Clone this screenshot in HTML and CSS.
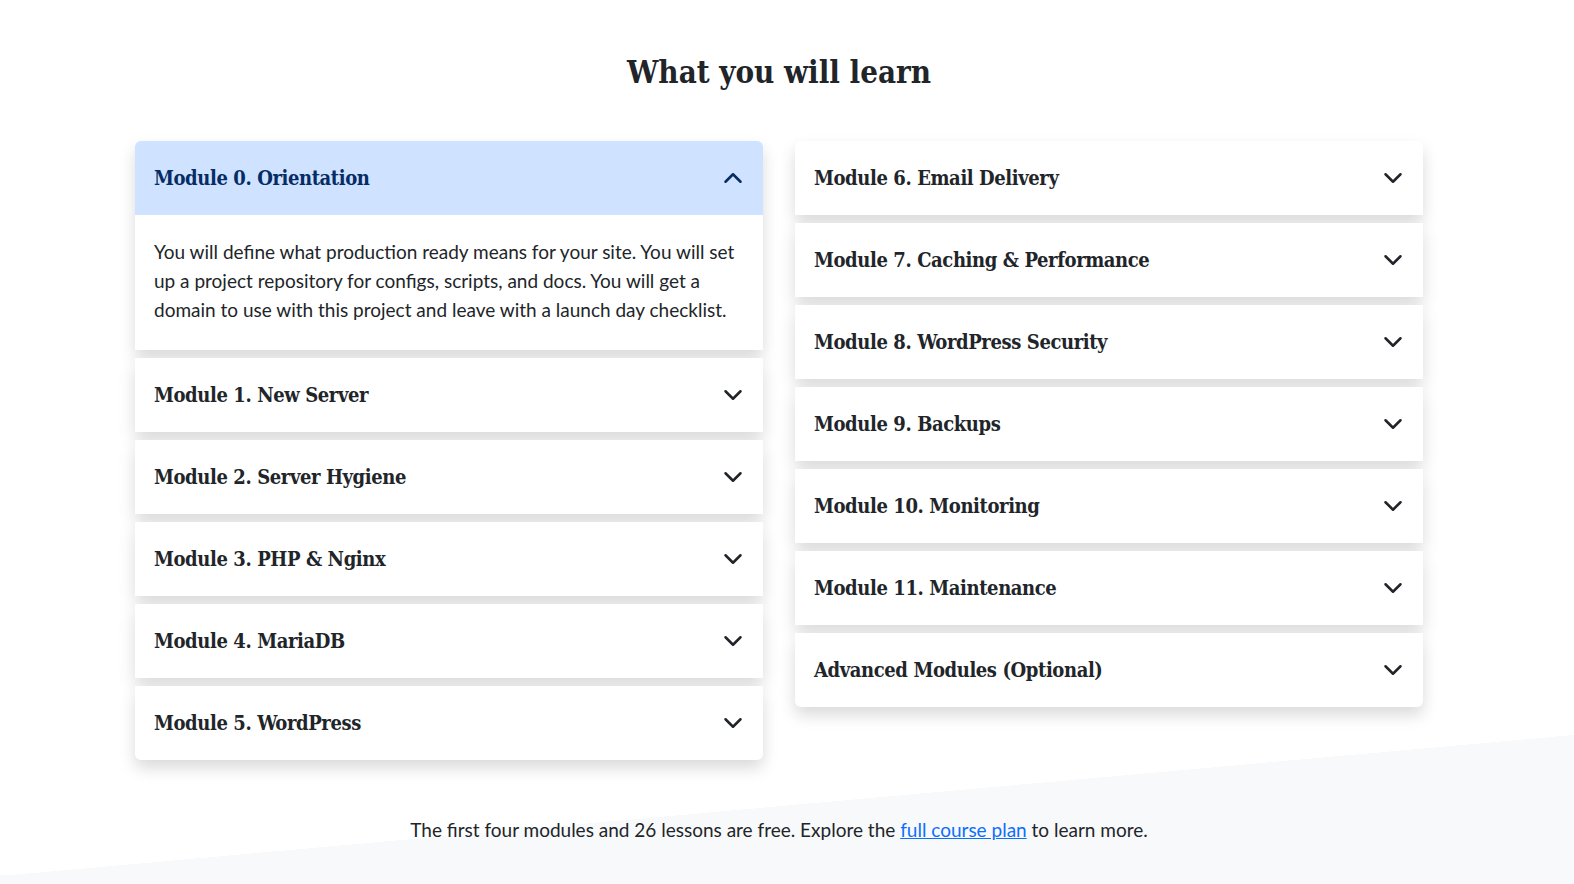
FILE: index.html
```html
<!DOCTYPE html>
<html lang="en">
<head>
<meta charset="utf-8">
<title>What you will learn</title>
<link rel="stylesheet" href="styles.css">
</head>
<body>
<div class="page">
  <section class="learn">
    <h2 class="learn-title">What you will learn</h2>
    <div class="columns">
      <div class="accordion">
        <div class="item open">
          <button class="item-head">
            <span class="item-title">Module 0. Orientation</span>
            <svg class="chev" viewBox="0 0 16 16"><path d="M2 11L8 5L14 11"/></svg>
          </button>
          <div class="item-body">You will define what production ready means for your site. You will set up a project repository for configs, scripts, and docs. You will get a domain to use with this project and leave with a launch day checklist.</div>
        </div>
        <div class="item"><button class="item-head"><span class="item-title">Module 1. New Server</span><svg class="chev" viewBox="0 0 16 16"><path d="M2 5L8 11L14 5"/></svg></button></div>
        <div class="item"><button class="item-head"><span class="item-title">Module 2. Server Hygiene</span><svg class="chev" viewBox="0 0 16 16"><path d="M2 5L8 11L14 5"/></svg></button></div>
        <div class="item"><button class="item-head"><span class="item-title">Module 3. PHP &amp; Nginx</span><svg class="chev" viewBox="0 0 16 16"><path d="M2 5L8 11L14 5"/></svg></button></div>
        <div class="item"><button class="item-head"><span class="item-title">Module 4. MariaDB</span><svg class="chev" viewBox="0 0 16 16"><path d="M2 5L8 11L14 5"/></svg></button></div>
        <div class="item"><button class="item-head"><span class="item-title">Module 5. WordPress</span><svg class="chev" viewBox="0 0 16 16"><path d="M2 5L8 11L14 5"/></svg></button></div>
      </div>
      <div class="accordion">
        <div class="item"><button class="item-head"><span class="item-title">Module 6. Email Delivery</span><svg class="chev" viewBox="0 0 16 16"><path d="M2 5L8 11L14 5"/></svg></button></div>
        <div class="item"><button class="item-head"><span class="item-title">Module 7. Caching &amp; Performance</span><svg class="chev" viewBox="0 0 16 16"><path d="M2 5L8 11L14 5"/></svg></button></div>
        <div class="item"><button class="item-head"><span class="item-title">Module 8. WordPress Security</span><svg class="chev" viewBox="0 0 16 16"><path d="M2 5L8 11L14 5"/></svg></button></div>
        <div class="item"><button class="item-head"><span class="item-title">Module 9. Backups</span><svg class="chev" viewBox="0 0 16 16"><path d="M2 5L8 11L14 5"/></svg></button></div>
        <div class="item"><button class="item-head"><span class="item-title">Module 10. Monitoring</span><svg class="chev" viewBox="0 0 16 16"><path d="M2 5L8 11L14 5"/></svg></button></div>
        <div class="item"><button class="item-head"><span class="item-title">Module 11. Maintenance</span><svg class="chev" viewBox="0 0 16 16"><path d="M2 5L8 11L14 5"/></svg></button></div>
        <div class="item"><button class="item-head"><span class="item-title">Advanced Modules (Optional)</span><svg class="chev" viewBox="0 0 16 16"><path d="M2 5L8 11L14 5"/></svg></button></div>
      </div>
    </div>
  </section>
  <section class="note">
    <p>The first four modules and 26 lessons are free. Explore the <a href="#">full course plan</a> to learn more.</p>
  </section>
</div>
</body>
</html>
```
FILE: styles.css
```css
* { box-sizing: border-box; }
html, body { margin: 0; padding: 0; }
body {
  font-family: Lato, "Open Sans", sans-serif;
  color: #212529;
  background: #fff;
}
.page {
  min-height: 884px;
  padding-right: 16px;
  display: flex;
  flex-direction: column;
  background:
    linear-gradient(to bottom right, rgba(248,249,250,0) 50%, #f8f9fa 50%) left bottom 8px / 100% 141px no-repeat,
    linear-gradient(#f8f9fa, #f8f9fa) left bottom / 100% 9px no-repeat,
    #fff;
}
.learn {
  padding-top: 52px;
}
.learn-title {
  margin: 0 0 49px;
  text-align: center;
  font-family: "DejaVu Serif Condensed", "DejaVu Serif", serif;
  font-stretch: condensed;
  font-weight: 700;
  font-size: 31px;
  line-height: 40px;
  color: #212529;
}
.columns {
  width: 1288px;
  margin: 0 auto;
  display: grid;
  grid-template-columns: 1fr 1fr;
  gap: 32px;
  align-items: start;
}
.accordion {
  display: flex;
  flex-direction: column;
  gap: 8px;
}
.item {
  background: #fff;
  box-shadow: 0 0.5rem 1rem rgba(0,0,0,0.15);
}
.item:first-child { border-top-left-radius: 6px; border-top-right-radius: 6px; }
.item:last-child { border-bottom-left-radius: 6px; border-bottom-right-radius: 6px; }
.item-head {
  width: 100%;
  height: 74px;
  display: flex;
  align-items: center;
  justify-content: space-between;
  padding: 0 20px 0 19px;
  border: 0;
  background: transparent;
  color: #212529;
  text-align: left;
  cursor: pointer;
}
.item:first-child .item-head { border-top-left-radius: 6px; border-top-right-radius: 6px; }
.item-title {
  font-family: "DejaVu Serif Condensed", "DejaVu Serif", serif;
  font-stretch: condensed;
  font-weight: 700;
  font-size: 20px;
  letter-spacing: -0.4px;
  line-height: 28px;
}
.chev {
  width: 20px;
  height: 20px;
  flex: none;
}
.chev path {
  fill: none;
  stroke: #212529;
  stroke-width: 2;
  stroke-linecap: round;
  stroke-linejoin: round;
}
.item.open .item-head {
  background: #cfe2ff;
  color: #052c65;
}
.item.open .chev path { stroke: #052c65; }
.item-body {
  height: 135px;
  padding: 22px 20px 0 19px;
  font-size: 19px;
  line-height: 29px;
}
.note {
  padding-top: 55px;
  text-align: center;
}
.note p {
  margin: 0;
  font-size: 19px;
  line-height: 29px;
}
.note a { color: #0d6efd; text-decoration: underline; }
```
